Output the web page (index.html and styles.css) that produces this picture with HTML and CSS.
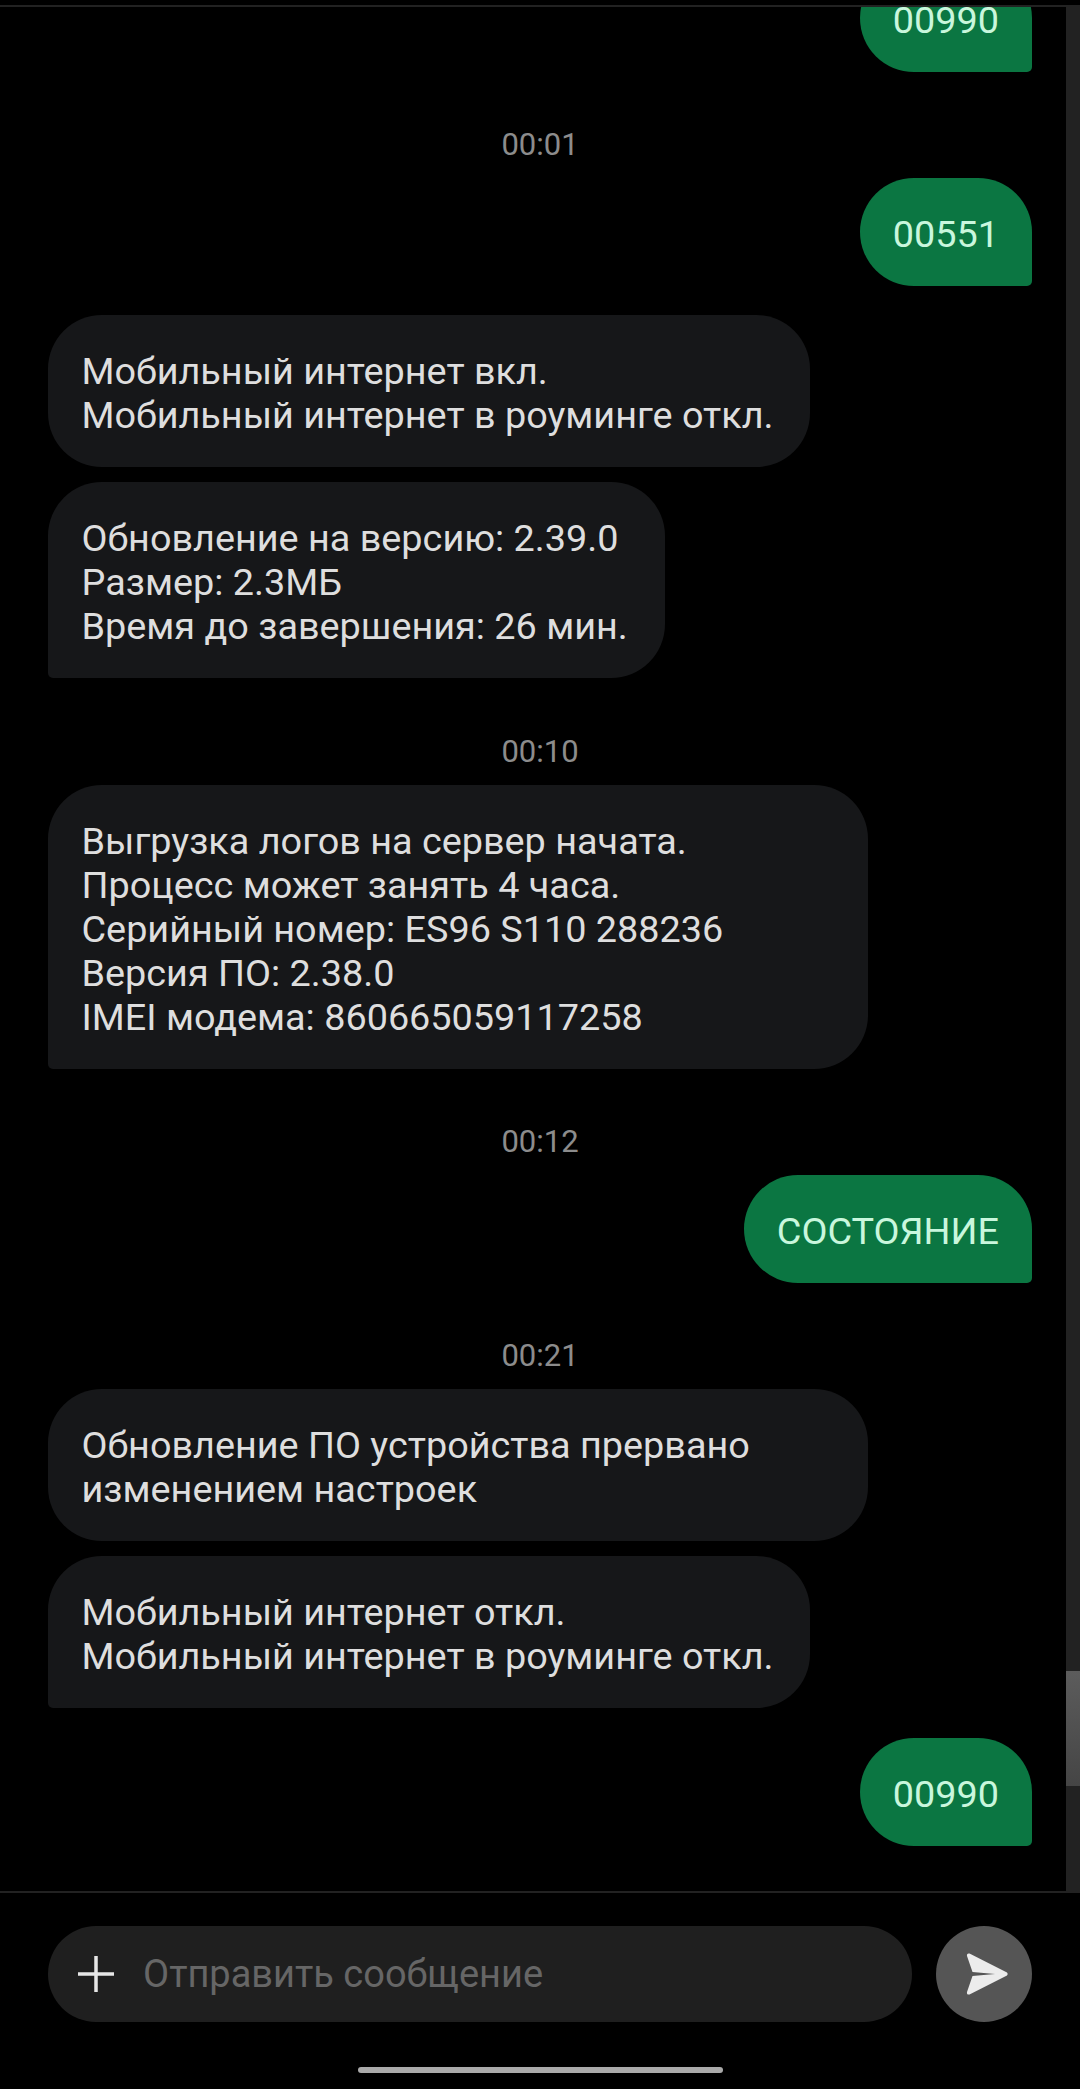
FILE: index.html
```html
<!DOCTYPE html>
<html lang="ru">
<head>
  <meta charset="UTF-8">
  <title>Сообщения</title>
  <link rel="stylesheet" href="styles.css">
</head>
<body>

  <div class="screen">
    <div class="chat">
      <div class="bubble sent">00990</div>

      <div class="time">00:01</div>
      <div class="bubble sent">00551</div>

      <div class="bubble received round first">Мобильный интернет вкл.<br>Мобильный интернет в роуминге откл.</div>
      <div class="bubble received">Обновление на версию: 2.39.0<br>Размер: 2.3МБ<br>Время до завершения: 26 мин.</div>

      <div class="time">00:10</div>
      <div class="bubble received wide">Выгрузка логов на сервер начата.<br>Процесс может занять 4 часа.<br>Серийный номер: ES96 S110 288236<br>Версия ПО: 2.38.0<br>IMEI модема: 860665059117258</div>

      <div class="time">00:12</div>
      <div class="bubble sent">СОСТОЯНИЕ</div>

      <div class="time">00:21</div>
      <div class="bubble received round wide">Обновление ПО устройства прервано изменением настроек</div>
      <div class="bubble received">Мобильный интернет откл.<br>Мобильный интернет в роуминге откл.</div>

      <div class="bubble sent last">00990</div>

      <div class="scrollbar"><div class="thumb"></div></div>
    </div>

    <div class="composer">
      <div class="input">
        <svg class="plus" width="36" height="36" viewBox="0 0 36 36">
          <path d="M18 0V36M0 18H36" stroke="#e6e6e6" stroke-width="3.5" fill="none"/>
        </svg>
        <span class="placeholder">Отправить сообщение</span>
      </div>
      <div class="send">
        <svg width="44" height="44" viewBox="0 0 44 44">
          <path d="M4.500 1.500 L42 20.500 Q43.500 22 42 23.500 L4.500 42.500 Q1.500 43 2 40 L7.500 24 L30 22 L7.500 20 L2 4 Q1.500 1 4.500 1.500 Z" fill="#ececec"/>
        </svg>
      </div>
    </div>

    <div class="home-row"><div class="home-bar"></div></div>
  </div>

</body>
</html>
```

FILE: styles.css
```css
* {
  box-sizing: border-box;
}

body {
  margin: 0;
  padding: 0;
  background: #000;
  font-family: Roboto, "Noto Sans", sans-serif;
  overflow: hidden;
}

.screen {
  display: flex;
  flex-direction: column;
  width: 1080px;
  height: 2089px;
  padding-top: 5px;
}

.chat {
  position: relative;
  flex: 1;
  min-height: 0;
  display: flex;
  flex-direction: column;
  justify-content: flex-end;
  padding: 0 48px 45px;
  overflow: hidden;
  border-top: 2px solid #222;
  border-bottom: 2px solid #222;
}

.bubble {
  flex-shrink: 0;
  font-size: 37.8px;
  line-height: 44px;
  padding: 34px 33px 30px;
  border-radius: 54px;
  color: #dedede;
}

.sent {
  align-self: flex-end;
  background: #0b7642;
  color: #c9f7dd;
  border-bottom-right-radius: 5px;
}

.received {
  align-self: flex-start;
  padding-right: 37px;
  padding-left: 33.5px;
  background: #161719;
  border-bottom-left-radius: 5px;
  margin-bottom: 15px;
}

.received.round {
  border-bottom-left-radius: 54px;
}

.received.first {
  margin-top: 29px;
}

.received.wide {
  width: 820px;
}

.received + .time {
  margin-top: 41.5px;
}

.sent.last {
  margin-top: 15px;
}

.time {
  flex-shrink: 0;
  text-align: center;
  font-size: 31px;
  line-height: 34px;
  color: #8c8c8c;
  margin: 56px 0 16px;
}

.scrollbar {
  position: absolute;
  top: 0;
  right: 0;
  bottom: 0;
  width: 14px;
  background: #222;
}

.thumb {
  position: absolute;
  top: 1664px;
  left: 0;
  width: 100%;
  height: 115px;
  background: linear-gradient(#5c5c5c, #454545);
}

.composer {
  display: flex;
  align-items: center;
  justify-content: space-between;
  flex-shrink: 0;
  padding: 33px 48px 0 48px;
}

.input {
  display: flex;
  align-items: center;
  width: 864px;
  height: 96px;
  padding-left: 30px;
  border-radius: 48px;
  background: #1f1f1f;
}

.plus {
  flex-shrink: 0;
}

.placeholder {
  margin-left: 29px;
  font-size: 38px;
  color: #666;
}

.send {
  display: flex;
  align-items: center;
  justify-content: center;
  width: 96px;
  height: 96px;
  padding-left: 5px;
  border-radius: 50%;
  background: #555;
}

.home-row {
  display: flex;
  justify-content: center;
  flex-shrink: 0;
  padding: 45px 0 16px;
}

.home-bar {
  width: 365px;
  height: 6px;
  border-radius: 3px;
  background: #aaa;
}
```
